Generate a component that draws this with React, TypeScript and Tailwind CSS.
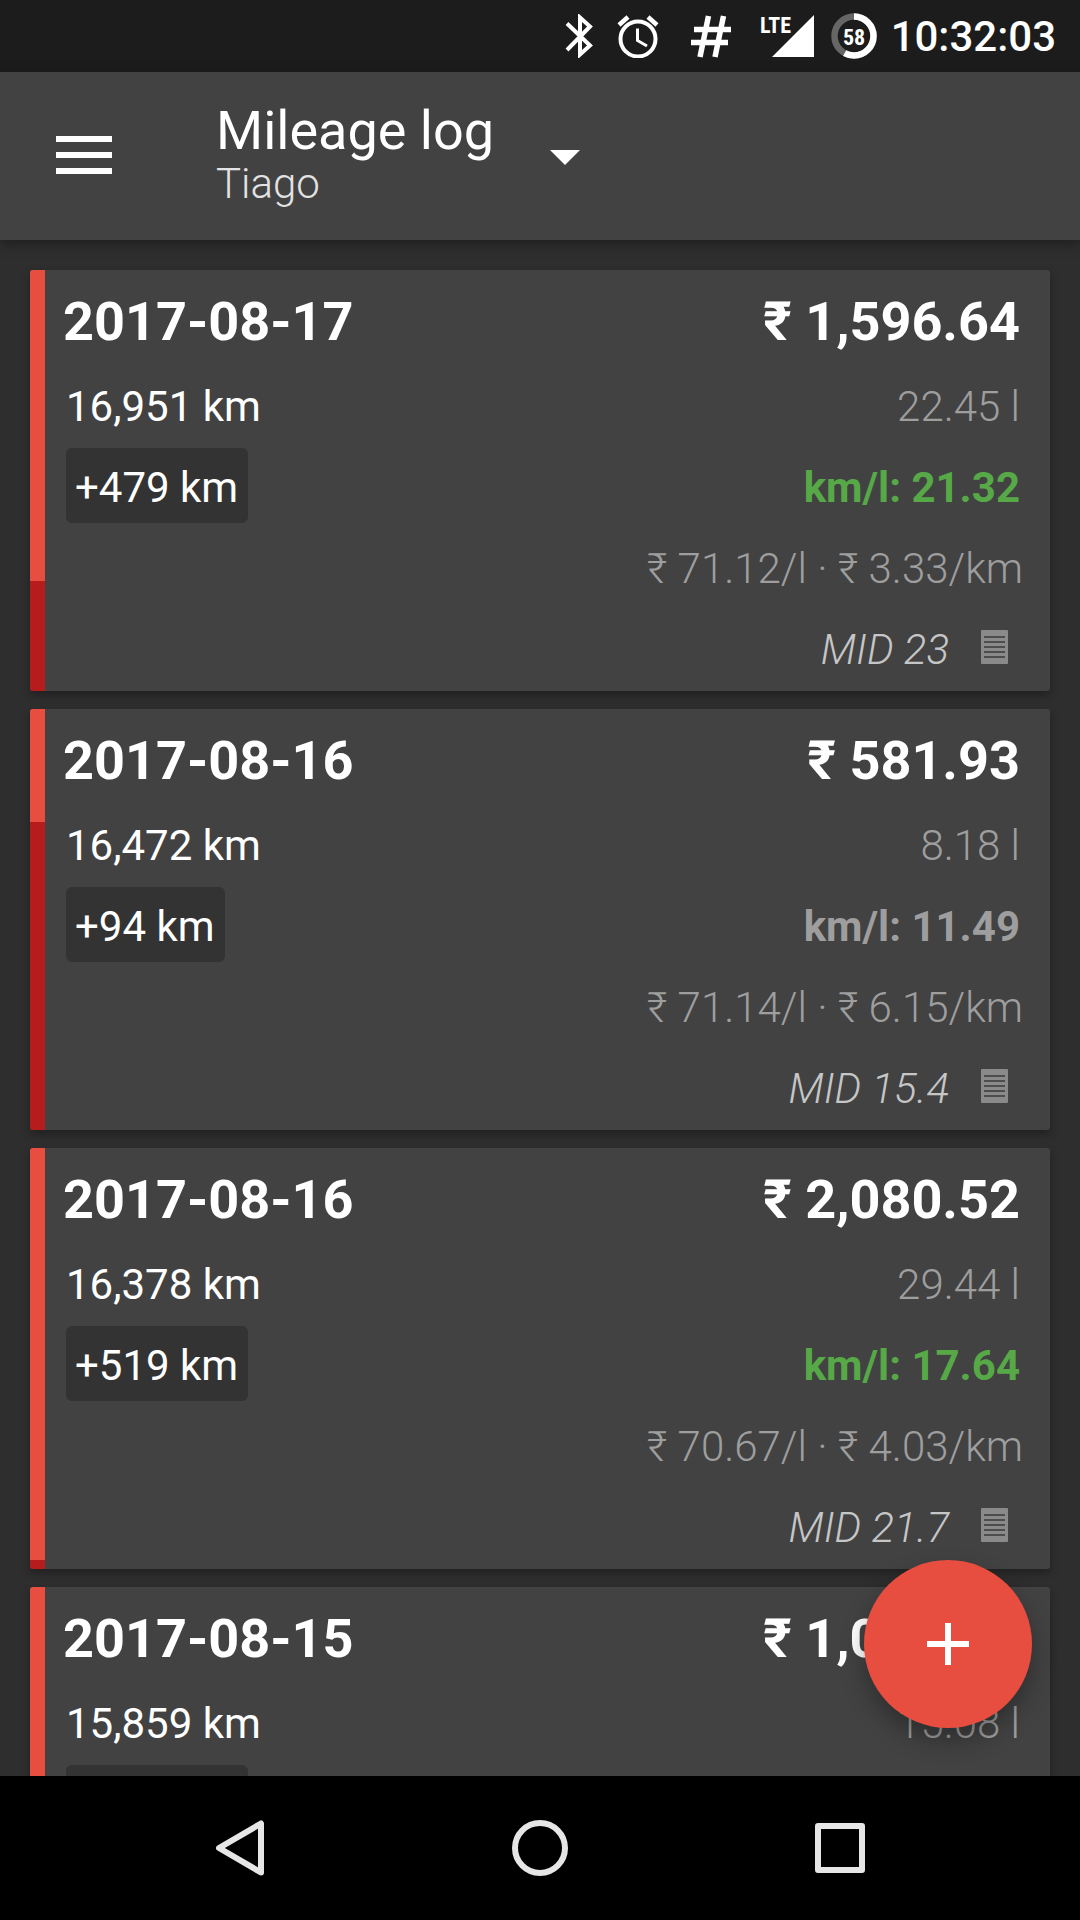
import React from "react";

type Entry = {
  date: string;
  total: string;
  odometer: string;
  distance: string;
  volume: string;
  economy: string;
  good: boolean;
  costs: string;
  note: string;
  level: number;
};

const entries: Entry[] = [
  {
    date: "2017-08-17",
    total: "₹ 1,596.64",
    odometer: "16,951 km",
    distance: "+479 km",
    volume: "22.45 l",
    economy: "km/l: 21.32",
    good: true,
    costs: "₹ 71.12/l · ₹ 3.33/km",
    note: "MID 23",
    level: 73.9,
  },
  {
    date: "2017-08-16",
    total: "₹ 581.93",
    odometer: "16,472 km",
    distance: "+94 km",
    volume: "8.18 l",
    economy: "km/l: 11.49",
    good: false,
    costs: "₹ 71.14/l · ₹ 6.15/km",
    note: "MID 15.4",
    level: 26.8,
  },
  {
    date: "2017-08-16",
    total: "₹ 2,080.52",
    odometer: "16,378 km",
    distance: "+519 km",
    volume: "29.44 l",
    economy: "km/l: 17.64",
    good: true,
    costs: "₹ 70.67/l · ₹ 4.03/km",
    note: "MID 21.7",
    level: 97.9,
  },
  {
    date: "2017-08-15",
    total: "₹ 1,072.49",
    odometer: "15,859 km",
    distance: "+263 km",
    volume: "15.08 l",
    economy: "km/l: 17.44",
    good: true,
    costs: "₹ 71.12/l · ₹ 4.08/km",
    note: "MID 20.1",
    level: 100,
  },
];

function StatusBar() {
  return (
    <div className="flex h-[72px] shrink-0 items-center justify-end bg-[#1c1c1c] pr-6 text-white">
      <svg className="mr-6 h-11 w-7" viewBox="0 0 28 44" fill="none" stroke="currentColor" strokeWidth="4" aria-label="Bluetooth">
        <path d="M2 9.500 L25 31.500 L15 40.500 V3.500 L25 12.500 L2 36" strokeLinejoin="miter" />
      </svg>
      <svg className="mr-8 h-11 w-[42px]" viewBox="0 0 42 44" fill="none" stroke="currentColor" aria-label="Alarm">
        <circle cx="21" cy="25" r="17.500" strokeWidth="4" />
        <path d="M2 11 L11 3 M40 11 L31 3" strokeWidth="4.500" />
        <path d="M20.500 14.500 V26.500 L30 32" strokeWidth="3" />
      </svg>
      <svg className="mr-7 h-11 w-10" viewBox="0 0 40 44" fill="none" stroke="currentColor" strokeWidth="5.500" aria-label="Notification">
        <path d="M17.500 2 L9 43 M32.500 2 L24 43 M3 15.500 H40 M0 28.500 H37" />
      </svg>
      <svg className="mr-4 h-11 w-[56px]" viewBox="0 0 56 44" aria-label="LTE signal">
        <path d="M55 1 V43 H13 Z" fill="currentColor" />
        <text x="1" y="19" fill="currentColor" fontFamily="'Roboto Condensed', Roboto, sans-serif" fontWeight="700" fontSize="22">
          LTE
        </text>
      </svg>
      <svg className="mr-[14px] h-[46px] w-[46px]" viewBox="0 0 46 46" fill="none" aria-label="Battery 58 percent">
        <circle cx="23" cy="23" r="19.500" stroke="#666666" strokeWidth="6.500" />
        <circle cx="23" cy="23" r="19.500" stroke="#ffffff" strokeWidth="6.500" pathLength="100" strokeDasharray="58 42" transform="rotate(-90 23 23)" />
        <text x="23" y="32" textAnchor="middle" fill="#ffffff" fontFamily="'Roboto Condensed', Roboto, sans-serif" fontWeight="700" fontSize="22">
          58
        </text>
      </svg>
      <time className="pt-0.5 text-[42px] leading-[72px] font-medium">10:32:03</time>
    </div>
  );
}

function AppBar() {
  return (
    <header className="relative z-10 flex h-[168px] shrink-0 items-center bg-[#424242] pb-0.5 pl-12 text-white shadow-[0_4px_12px_rgba(0,0,0,0.35)]">
      <button type="button" aria-label="Open menu" className="flex h-[72px] w-[72px] items-center justify-center">
        <svg className="h-[38px] w-14" viewBox="0 0 56 38" fill="currentColor">
          <path d="M0 0 H56 V6 H0 Z M0 16 H56 V22 H0 Z M0 32 H56 V38 H0 Z" />
        </svg>
      </button>
      <button type="button" aria-haspopup="listbox" className="ml-24 flex items-center gap-14 pb-0.5 text-left">
        <span className="flex flex-col">
          <span className="text-[54px] leading-[60px]">Mileage log</span>
          <span className="text-[42px] leading-[46px] font-light text-[#e3e3e3]">Tiago</span>
        </span>
        <svg className="mt-1.5 h-[15px] w-[30px]" viewBox="0 0 30 15" fill="currentColor">
          <path d="M0 0 H30 L15 15 Z" />
        </svg>
      </button>
    </header>
  );
}

function NoteIcon() {
  return (
    <svg className="h-[34px] w-[27px]" viewBox="0 0 27 34" aria-hidden="true">
      <rect width="27" height="34" rx="1" fill="#8a8a8a" />
      <path d="M3 7 H24 M3 12 H24 M3 17 H24 M3 22 H24 M3 27 H24" stroke="#4d4d4d" strokeWidth="2" />
    </svg>
  );
}

function EntryCard({ entry }: { entry: Entry }) {
  return (
    <li className="flex shrink-0 overflow-hidden rounded-[3px] bg-[#424242] shadow-[0_4px_8px_rgba(0,0,0,0.3)]">
      <div className="w-[15px] shrink-0 bg-[#b71c1c]">
        <div className="bg-[#e74e40]" style={{ height: `${entry.level}%` }} />
      </div>
      <div className="flex flex-1 justify-between pt-[7px] pr-[27px] pb-px pl-[18px] text-[42px] leading-[81px]">
        <div className="flex flex-col items-start text-white">
          <h2 className="text-[54px] leading-[89px] font-bold">{entry.date}</h2>
          <p className="pl-[3px]">{entry.odometer}</p>
          <p className="mt-px ml-[3px] rounded-md bg-[#333333] pt-1 pr-2.5 pl-[9px] leading-[71px]">{entry.distance}</p>
        </div>
        <div className="flex flex-col items-end font-light text-[#9e9e9e]">
          <p className="pr-[3px] text-[54px] leading-[89px] font-bold text-white">{entry.total}</p>
          <p className="pr-[3px]">{entry.volume}</p>
          <p className={entry.good ? "pr-[3px] font-bold text-[#57a847]" : "pr-[3px] font-bold"}>{entry.economy}</p>
          <p>{entry.costs}</p>
          <div className="flex gap-8 pr-[15px]">
            <p className="text-[#c6c6c6] italic">{entry.note}</p>
            <div className="pt-[21px]">
              <NoteIcon />
            </div>
          </div>
        </div>
      </div>
    </li>
  );
}

function NavBar() {
  return (
    <nav className="flex h-36 shrink-0 items-center justify-center gap-[156px] bg-black text-[#e6e6e6]">
      <button type="button" aria-label="Back" className="flex h-36 w-36 items-center justify-center">
        <svg className="h-14 w-12" viewBox="0 0 48 56" fill="none" stroke="currentColor" strokeWidth="6" strokeLinejoin="round">
          <path d="M45 3.500 V52.500 L3 28 Z" />
        </svg>
      </button>
      <button type="button" aria-label="Home" className="flex h-36 w-36 items-center justify-center">
        <svg className="h-14 w-14" viewBox="0 0 56 56" fill="none" stroke="currentColor" strokeWidth="6">
          <circle cx="28" cy="28" r="25" />
        </svg>
      </button>
      <button type="button" aria-label="Recent apps" className="flex h-36 w-36 items-center justify-center">
        <svg className="h-[50px] w-[50px]" viewBox="0 0 50 50" fill="none" stroke="currentColor" strokeWidth="6" strokeLinejoin="round">
          <rect x="3" y="3" width="44" height="44" />
        </svg>
      </button>
    </nav>
  );
}

export default function App() {
  return (
    <div className="flex h-screen flex-col bg-[#2e2e2e] font-['Roboto',sans-serif]">
      <StatusBar />
      <AppBar />
      <main className="relative min-h-0 flex-1 overflow-hidden">
        <ul className="flex flex-col gap-[18px] px-[30px] pt-[30px]">
          {entries.map((entry) => (
            <EntryCard key={entry.date + entry.odometer} entry={entry} />
          ))}
        </ul>
        <button
          type="button"
          aria-label="Add entry"
          className="absolute right-12 bottom-12 flex h-[168px] w-[168px] items-center justify-center rounded-full bg-[#e74e40] text-white shadow-[0_12px_24px_rgba(0,0,0,0.3)]"
        >
          <svg className="h-[42px] w-[42px]" viewBox="0 0 42 42" fill="currentColor">
            <path d="M18 0 H24 V18 H42 V24 H24 V42 H18 V24 H0 V18 H18 Z" />
          </svg>
        </button>
      </main>
      <NavBar />
    </div>
  );
}
